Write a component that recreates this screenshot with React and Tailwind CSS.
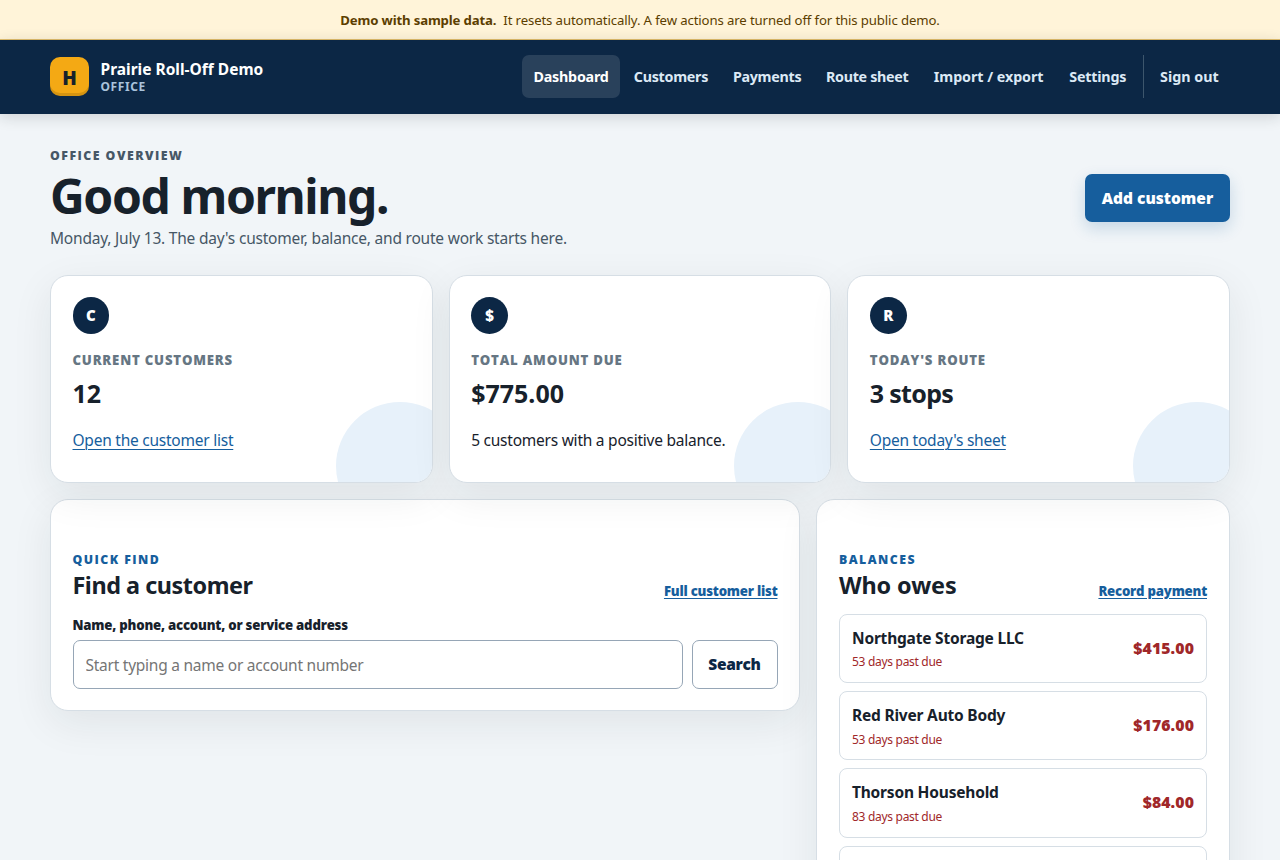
import React, { useState } from 'react';

const NAV_ITEMS = [
    { label: 'Dashboard', className: 'w-[98px] tracking-[-0.22px]' },
    { label: 'Customers', className: 'w-[97px] tracking-[-0.28px]' },
    { label: 'Payments', className: 'w-[90.5px] tracking-[-0.3px]' },
    { label: 'Route sheet', className: 'w-[105px] tracking-[-0.3px]' },
    { label: 'Import / export', className: 'w-[133px] tracking-[-0.05px]' },
    { label: 'Settings', className: 'w-[80.5px] tracking-[-0.2px]' },
];

const STATS = [
    { icon: 'C', label: 'Current customers', value: '12', link: 'Open the customer list' },
    { icon: '$', label: 'Total amount due', value: '$775.00', note: '5 customers with a positive balance.' },
    { icon: 'R', label: "Today's route", value: '3 stops', valueClass: 'tracking-[-0.7px]', link: "Open today's sheet" },
];

const BALANCES = [
    { name: 'Northgate Storage LLC', days: 53, amount: '$415.00' },
    { name: 'Red River Auto Body', days: 53, amount: '$176.00' },
    { name: 'Thorson Household', days: 83, amount: '$84.00' },
];

const StatCard = ({ icon, label, value, valueClass = '', link, note }) => (
    <article className="relative h-[208px] overflow-hidden rounded-[18px] border border-[#d6dee5] bg-white px-[21.5px] pt-[21px] shadow-[0_12px_40px_rgba(23,32,32,0.08)]">
        <div className="absolute -right-8 -bottom-12 size-32 rounded-full bg-[#e7f1fa]"></div>
        <div className="relative">
            <span className="flex size-[36.8px] items-center justify-center rounded-full bg-[#0c2745] font-['Open_Sans'] text-[15px] font-extrabold text-white">
                {icon}
            </span>
            <p className="mt-[16.5px] font-['Open_Sans'] text-[13.2px] leading-5 font-extrabold tracking-[0.8px] text-[#667683] uppercase">{label}</p>
            <p className={`mt-2 text-[25px] leading-[30px] font-bold ${valueClass}`}>{value}</p>
            <p className="mt-[19.7px] text-[15.5px] leading-6 tracking-[-0.24px]">
                {link ? (
                    <a href="#" className="text-[#165e9d] underline decoration-1 underline-offset-[3px]">{link}</a>
                ) : note}
            </p>
        </div>
    </article>
);

const PanelHeading = ({ eyebrow, title, titleClass, link }) => (
    <div className="flex items-end justify-between">
        <div>
            <p className="font-['Open_Sans'] text-[12.3px] leading-[18px] font-extrabold tracking-[1.45px] text-[#165e9d] uppercase">{eyebrow}</p>
            <h2 className={`mt-px text-[23.4px] leading-[30px] font-bold ${titleClass}`}>{title}</h2>
        </div>
        <a href="#" className="-mb-px font-['Open_Sans'] text-[13.2px] leading-5 font-extrabold tracking-[-0.22px] text-[#165e9d] underline decoration-1 underline-offset-2">
            {link}
        </a>
    </div>
);

export default function App() {
    const [query, setQuery] = useState('');

    return (
        <div className="h-[860px] overflow-hidden bg-[#f1f5f8] font-['Noto_Sans',sans-serif] text-[#17212b]">
            <div className="flex h-10 items-center justify-center gap-[7px] border-b border-[#e0bd6c] bg-[#fff4d9] pt-0.5 text-[13.2px] text-[#5c3e00]">
                <strong className="font-bold tracking-[-0.16px]">Demo with sample data.</strong>
                <span className="tracking-[-0.125px]">It resets automatically. A few actions are turned off for this public demo.</span>
            </div>

            <header className="relative h-[74px] bg-[#0c2745] pb-px shadow-[0_3px_14px_rgba(23,32,32,0.16)]">
                <div className="mx-auto flex h-full w-[1180px] items-center justify-between">
                    <a href="#" className="flex items-center gap-[11.5px]">
                        <span className="flex size-[39px] items-center justify-center rounded-[10px] bg-[#f4a914] pt-[3px] font-['Open_Sans'] text-[19px] font-extrabold text-[#17212b] shadow-[inset_0_-3px_0_rgba(0,0,0,0.12)]">
                            H
                        </span>
                        <span className="flex flex-col">
                            <span className="text-[15.5px] leading-5 font-bold text-white">Prairie Roll-Off Demo</span>
                            <span className="text-[12px] leading-[15px] font-bold tracking-[0.6px] text-[#a9c3dc]">OFFICE</span>
                        </span>
                    </a>
                    <nav className="flex items-center gap-[2.4px] text-[14.3px] font-bold text-[#dce9f5]">
                        {NAV_ITEMS.map((item, i) => (
                            <a
                                key={item.label} href="#"
                                className={`flex h-[43px] items-center justify-center rounded-[7px] pt-px whitespace-nowrap ${item.className} ${i === 0 ? 'bg-white/12 text-white' : ''}`}
                            >
                                {item.label}
                            </a>
                        ))}
                        <a href="#" className="ml-[2.6px] flex h-[43px] w-[87px] items-center border-l border-[#3d566c] pt-px pl-4 whitespace-nowrap">
                            Sign out
                        </a>
                    </nav>
                </div>
            </header>

            <main className="mx-auto w-[1180px] pt-[33px]">
                <div className="flex items-center justify-between">
                    <div>
                        <p className="font-['Open_Sans'] text-[12.3px] leading-[18px] font-extrabold tracking-[1.48px] text-[#465766] uppercase">Office overview</p>
                        <h1 className="mt-1.5 text-[48px] leading-[50px] font-bold tracking-[-1.41px]">Good morning.</h1>
                        <p className="mt-[5px] text-[15.5px] leading-6 tracking-[-0.21px] text-[#465766]">
                            Monday, July 13. The day's customer, balance, and route work starts here.
                        </p>
                    </div>
                    <button className="-mt-px h-12 w-[145px] rounded-[7px] bg-[#165e9d] pt-0.5 font-['Open_Sans'] text-[15.5px] font-extrabold text-white shadow-[0_6px_16px_rgba(22,94,157,0.2)]">
                        Add customer
                    </button>
                </div>

                <section className="mt-[25px] grid grid-cols-3 gap-4">
                    {STATS.map((stat) => <StatCard key={stat.label} {...stat} />)}
                </section>

                <div className="mt-4 grid grid-cols-[750px_414px] items-start gap-4">
                    <section className="rounded-[18px] border border-[#d6dee5] bg-white px-[21.5px] pt-[51px] pb-[21px] shadow-[0_12px_40px_rgba(23,32,32,0.08)]">
                        <PanelHeading eyebrow="Quick find" title="Find a customer" titleClass="tracking-[-0.47px]" link="Full customer list" />
                        <form onSubmit={(e) => e.preventDefault()}>
                            <label htmlFor="q" className="mt-[15px] block font-['Open_Sans'] text-[13.2px] leading-5 font-extrabold tracking-[-0.21px]">
                                Name, phone, account, or service address
                            </label>
                            <div className="mt-[5px] flex gap-[9px]">
                                <input
                                    id="q" value={query} onChange={(e) => setQuery(e.target.value)}
                                    className="h-[49px] min-w-0 flex-1 rounded-[7px] border border-[#96a6b6] bg-white px-3 text-[15.5px] tracking-[-0.25px] placeholder-[#757575]"
                                    placeholder="Start typing a name or account number"
                                />
                                <button className="h-[49px] w-[86px] rounded-[7px] border border-[#96a6b6] bg-white font-['Open_Sans'] text-[15.5px] font-extrabold tracking-[-0.3px] text-[#0c2745]">
                                    Search
                                </button>
                            </div>
                        </form>
                    </section>

                    <section className="rounded-[18px] border border-[#d6dee5] bg-white px-[22px] pt-[51px] pb-[21px] shadow-[0_12px_40px_rgba(23,32,32,0.08)]">
                        <PanelHeading eyebrow="Balances" title="Who owes" titleClass="tracking-[-0.1px]" link="Record payment" />
                        <ul className="mt-3.5 flex flex-col gap-2">
                            {BALANCES.map((row) => (
                                <li key={row.name} className="flex h-[69.2px] items-center justify-between rounded-lg border border-[#d6dee5] px-3">
                                    <div>
                                        <p className="text-[15.5px] leading-6 font-bold tracking-[-0.2px]">{row.name}</p>
                                        <p className="mt-[2.5px] text-[12px] leading-[19px] tracking-[-0.3px] text-[#a02729]">{row.days} days past due</p>
                                    </div>
                                    <span className="font-['Open_Sans'] text-[15.8px] font-extrabold tracking-[0.1px] text-[#a02729]">{row.amount}</span>
                                </li>
                            ))}
                            <li className="h-[69.2px] rounded-lg border border-[#d6dee5]"></li>
                        </ul>
                    </section>
                </div>
            </main>
        </div>
    );
}
